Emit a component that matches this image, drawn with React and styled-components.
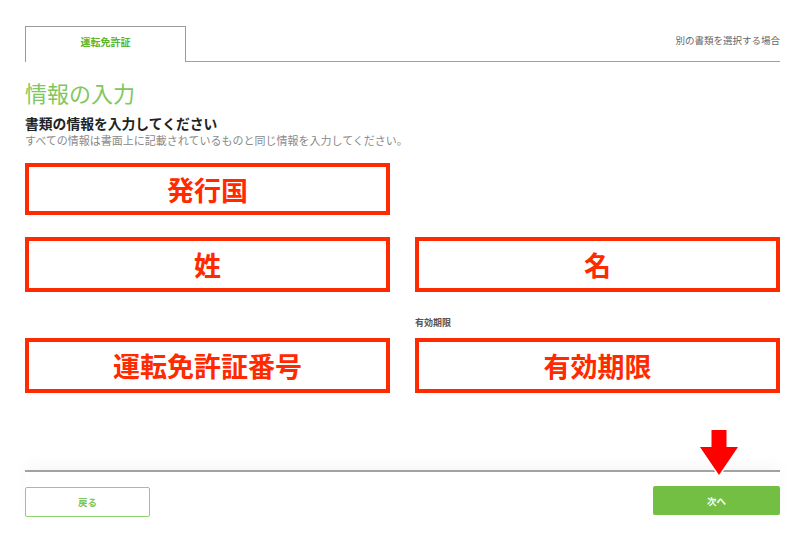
import React from 'react';
import styled, { createGlobalStyle } from 'styled-components';

const GlobalStyle = createGlobalStyle`
  html, body {
    margin: 0;
    padding: 0;
    background: #fff;
  }
  body {
    font-family: "Noto Sans CJK JP", "Noto Sans", "Liberation Sans", sans-serif;
    color: #222;
  }
`;

const Page = styled.div`
  width: 755px;
  margin-left: 25px;
  padding-top: 26px;
`;

const TabBar = styled.div`
  display: flex;
  height: 36px;
`;

const Tab = styled.div`
  width: 161px;
  border: 1px solid #9a9a9a;
  border-bottom: none;
  display: flex;
  justify-content: center;
  padding-top: 7px;
  box-sizing: border-box;
  font-size: 10px;
  font-weight: 700;
  color: #5ab52a;
`;

const TabRest = styled.div`
  flex: 1;
  border-bottom: 1.5px solid #a0a0a0;
  display: flex;
  justify-content: flex-end;
  padding-top: 7px;
  font-size: 9.5px;
  color: #666;
`;

const Title = styled.h1`
  margin: 16px 0 0;
  font-size: 22px;
  line-height: 28px;
  font-weight: 400;
  color: #80c75e;
`;

const Lead = styled.h2`
  margin: 9px 0 0;
  font-size: 13.8px;
  line-height: 16px;
  font-weight: 700;
  color: #222;
`;

const Note = styled.p`
  margin: 3px 0 0;
  font-size: 11px;
  line-height: 13px;
  color: #8a8a8a;
`;

const Row = styled.div`
  display: flex;
  gap: 25px;
  margin-top: ${({ $top }) => $top}px;
`;

const Cell = styled.div`
  width: 365px;
  display: flex;
  flex-direction: column;
  justify-content: flex-end;
`;

const FieldLabel = styled.div`
  font-size: 9px;
  line-height: 12px;
  font-weight: 700;
  color: #555;
  margin-bottom: 9px;
`;

const Field = styled.div`
  height: ${({ $h }) => $h}px;
  border: 4px solid #ff2a00;
  box-sizing: border-box;
  display: flex;
  align-items: center;
  justify-content: center;
  font-size: 27px;
  font-weight: 700;
  color: #ff2a00;
`;

const Footer = styled.div`
  position: relative;
  margin-top: 77px;
  border-top: 2px solid #a2a2a2;
  box-shadow: 0 -6px 12px rgba(0, 0, 0, 0.03);
  padding-top: 15px;
  display: flex;
  justify-content: space-between;
`;

const Button = styled.button`
  width: ${({ $primary }) => ($primary ? 127 : 125)}px;
  height: ${({ $primary }) => ($primary ? 29 : 30)}px;
  margin-top: ${({ $primary }) => ($primary ? -1 : 0)}px;
  border-radius: 2px;
  border: ${({ $primary }) => ($primary ? 'none' : '1.5px solid #8fd06f')};
  background: ${({ $primary }) => ($primary ? '#72bf44' : '#fff')};
  color: ${({ $primary }) => ($primary ? '#fff' : '#7cc45a')};
  font-family: inherit;
  font-size: 9.5px;
  font-weight: 700;
  padding: 0;
`;

const Pointer = styled.svg`
  position: absolute;
  top: -44px;
  right: 40px;
`;

function DownArrow() {
  return (
    <Pointer width="42" height="50" viewBox="0 0 42 50">
      <path
        d="M13.5 2 H28.5 V19 H40 L21 47 L2 19 H13.5 Z"
        fill="#ff0000"
        stroke="#fff"
        strokeWidth="3"
        strokeLinejoin="round"
        paintOrder="stroke"
      />
    </Pointer>
  );
}

export default function App() {
  return (
    <>
      <GlobalStyle />
      <Page>
        <TabBar>
          <Tab>運転免許証</Tab>
          <TabRest>別の書類を選択する場合</TabRest>
        </TabBar>

        <Title>情報の入力</Title>
        <Lead>書類の情報を入力してください</Lead>
        <Note>すべての情報は書面上に記載されているものと同じ情報を入力してください。</Note>

        <Row $top={16}>
          <Cell>
            <Field $h={52}>発行国</Field>
          </Cell>
        </Row>
        <Row $top={22}>
          <Cell>
            <Field $h={55}>姓</Field>
          </Cell>
          <Cell>
            <Field $h={55}>名</Field>
          </Cell>
        </Row>
        <Row $top={25}>
          <Cell>
            <Field $h={55}>運転免許証番号</Field>
          </Cell>
          <Cell>
            <FieldLabel>有効期限</FieldLabel>
            <Field $h={55}>有効期限</Field>
          </Cell>
        </Row>

        <Footer>
          <Button>戻る</Button>
          <Button $primary>次へ</Button>
          <DownArrow />
        </Footer>
      </Page>
    </>
  );
}
